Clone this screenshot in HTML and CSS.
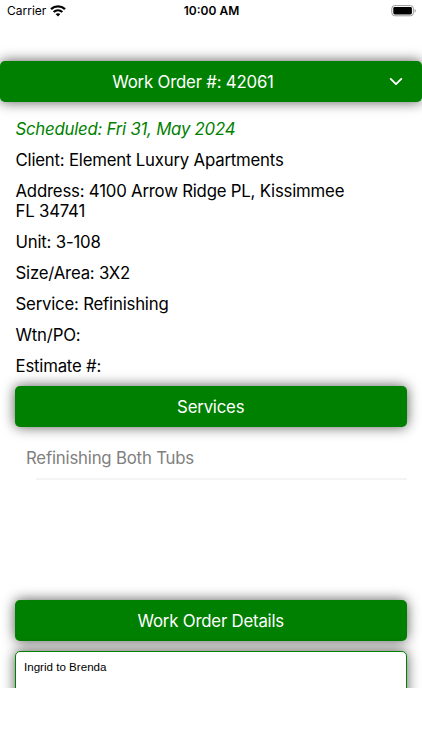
FILE: index.html
```
<!DOCTYPE html>
<html lang="en">
<head>
    <meta charset="UTF-8">
    <title>Work Order</title>
    <link rel="stylesheet" href="styles.css">
</head>
<body>
<div class="status">
    <div class="carrier">
        <span>Carrier</span>
        <svg class="wifi" width="16" height="12" viewBox="0 0 16 12">
            <path d="M1 4.1C5 .4 11 .4 15 4.1" fill="none" stroke="#000" stroke-width="2.3"/>
            <path d="M3.6 7C6.2 4.7 9.8 4.7 12.4 7" fill="none" stroke="#000" stroke-width="2.1"/>
            <path d="M8 11.4L5.6 9C7 7.9 9 7.9 10.4 9z"/>
        </svg>
    </div>
    <div class="time">10:00 AM</div>
    <svg class="battery" width="26" height="12" viewBox="0 0 26 12">
        <rect x="1.8" y=".6" width="21.6" height="10.2" rx="3" fill="none" stroke="#999"/>
        <rect x="3.3" y="2" width="18.6" height="7.4" rx="1.4"/>
        <path d="M24.7 4C26 4.4 26 7.2 24.7 7.6z" fill="#888"/>
    </svg>
</div>
<div class="screen">
    <div class="bar header">
        <span class="title">Work Order #: 42061</span>
        <svg class="arrow" width="14" height="9" viewBox="0 0 14 9">
            <path d="M1.7 1.9L7 7.1L12.3 1.9" fill="none" stroke="#fff" stroke-width="1.9" stroke-linecap="round" stroke-linejoin="round"/>
        </svg>
    </div>
    <div class="content">
        <ul class="info">
            <li class="scheduled">Scheduled: Fri 31, May 2024</li>
            <li>Client: Element Luxury Apartments</li>
            <li>Address: 4100 Arrow Ridge PL, Kissimmee<br>FL 34741</li>
            <li>Unit: 3-108</li>
            <li>Size/Area: 3X2</li>
            <li>Service: Refinishing</li>
            <li>Wtn/PO:</li>
            <li>Estimate #:</li>
        </ul>
        <div class="bar"><span class="title">Services</span></div>
        <ul class="services">
            <li>Refinishing Both Tubs</li>
        </ul>
        <div class="bar"><span class="title">Work Order Details</span></div>
        <div class="details">Ingrid to Brenda</div>
    </div>
</div>
</body>
</html>
```
FILE: styles.css
```
*{margin:0;padding:0;box-sizing:border-box;}
ul{list-style:none;}
svg{display:block;}
body{width:422px;height:750px;overflow:hidden;background:#fff;color:#000;font-family:Inter,"Liberation Sans",sans-serif;}

/* status bar */
.status{height:21px;padding:0 6px 0 7px;display:grid;grid-template-columns:1fr auto 1fr;align-items:center;}
.carrier{display:flex;align-items:center;gap:4px;font-size:12px;}
.time{font-size:12px;font-weight:600;}
.battery{justify-self:end;}

.screen{height:667px;padding-top:40px;overflow:hidden;}
.bar{height:41px;display:flex;align-items:center;justify-content:center;border-radius:5px;background:#008000;color:#fff;font-size:16.8px;letter-spacing:-.2px;box-shadow:0 0 13px rgba(0,0,0,.66);}
.header{padding:0 19px 0 0;}
.header .title{flex:1;padding-right:3px;text-align:center;}
.content{padding:17px 15.5px 0 15px;}
.info{height:267px;padding-left:.5px;font-size:16.8px;letter-spacing:-.21px;line-height:20.4px;}
.info li{margin-bottom:10.6px;}
.info .scheduled{color:#008000;font-style:italic;letter-spacing:-.24px;}
.services{height:173px;padding:21px 0 0 11px;}
.services li{height:32px;margin-left:10px;border-bottom:2px solid #f4f4f4;text-indent:-10px;font-size:16.8px;letter-spacing:-.2px;line-height:21px;color:#808080;}
.details{height:80px;margin-top:10px;padding:8px;border:1px solid #008000;border-radius:5px;background:#fff;font-family:"Liberation Sans",Arial,sans-serif;font-size:11.6px;line-height:14px;box-shadow:0 0 13px rgba(0,0,0,.66);}
```
